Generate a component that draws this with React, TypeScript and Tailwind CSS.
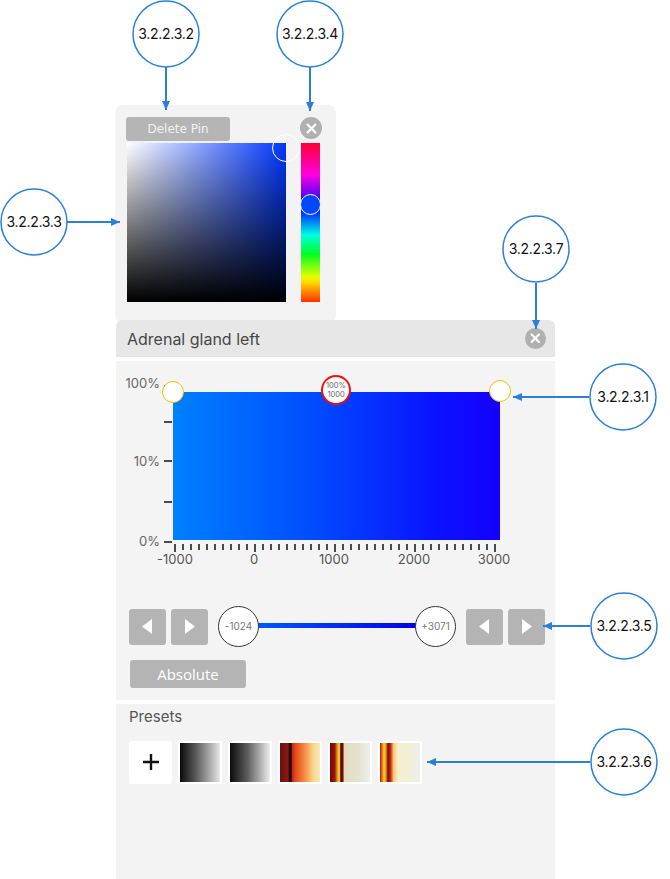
import React from 'react';

const BLUE = '#2b7fd6';

type Callout = { cx: number; cy: number; label: string; x1: number; y1: number; x2: number; y2: number };

const callouts: Callout[] = [
  { cx: 166, cy: 34, label: '3.2.2.3.2', x1: 166, y1: 67, x2: 166, y2: 110 },
  { cx: 310, cy: 34, label: '3.2.2.3.4', x1: 310, y1: 67, x2: 310, y2: 111 },
  { cx: 34, cy: 222, label: '3.2.2.3.3', x1: 67, y1: 222, x2: 120, y2: 222 },
  { cx: 536, cy: 249, label: '3.2.2.3.7', x1: 536, y1: 283, x2: 536, y2: 329 },
  { cx: 623, cy: 397, label: '3.2.2.3.1', x1: 589, y1: 397, x2: 513, y2: 397 },
  { cx: 624, cy: 626, label: '3.2.2.3.5', x1: 590, y1: 626, x2: 543, y2: 626 },
  { cx: 624, cy: 762, label: '3.2.2.3.6', x1: 590, y1: 762, x2: 427, y2: 762 },
];

// arrowhead polygon pointing from (x1,y1) toward (x2,y2)
function arrowHead(c: Callout) {
  const dx = c.x2 - c.x1;
  const dy = c.y2 - c.y1;
  const len = Math.hypot(dx, dy);
  const ux = dx / len;
  const uy = dy / len;
  const bx = c.x2 - ux * 9;
  const by = c.y2 - uy * 9;
  const px = -uy * 4;
  const py = ux * 4;
  return `${c.x2},${c.y2} ${bx + px},${by + py} ${bx - px},${by - py}`;
}

function CloseDot({ size = 20 }: { size?: number }) {
  return (
    <div className="rounded-full bg-[#b0b0b0] flex items-center justify-center" style={{ width: size, height: size }}>
      <svg width={size * 0.5} height={size * 0.5} viewBox="0 0 10 10">
        <path d="M1.5 1.5 L8.5 8.5 M8.5 1.5 L1.5 8.5" stroke="white" strokeWidth="2" strokeLinecap="round" />
      </svg>
    </div>
  );
}

function StepButton({ dir }: { dir: 'left' | 'right' }) {
  return (
    <button className="w-[37px] h-[36px] rounded-[3px] bg-[#b4b4b4] flex items-center justify-center">
      <svg width="11" height="15" viewBox="0 0 11 15">
        {dir === 'left' ? <polygon points="10,0 10,15 0,7.5" fill="white" /> : <polygon points="1,0 1,15 11,7.5" fill="white" />}
      </svg>
    </button>
  );
}

const presets = [
  'bg-[linear-gradient(to_right,#0a0a0a,#5a5a5a_40%,#e6e6e6)]',
  'bg-[linear-gradient(to_right,#0a0a0a,#606060_45%,#eeeeee)]',
  'bg-[linear-gradient(to_right,#6b0f0f_0%,#8a1a10_20%,#1a0505_24%,#1a0505_28%,#c81e10_30%,#e04a1a_38%,#f07030_52%,#f89a50_66%,#f8d890_84%,#f6eab8)]',
  'bg-[linear-gradient(to_right,#700808_0%,#a01010_12%,#e8c020_20%,#f0c030_24%,#500505_27%,#800a0a_32%,#e0dcc0_36%,#e4e2cc_70%,#efefef)]',
  'bg-[linear-gradient(to_right,#c01010_0%,#ffd020_10%,#f8a020_14%,#701010_20%,#c02010_26%,#f8c870_34%,#f6f0d0_45%,#f2efd8_75%,#eeeeee)]',
];

export default function App() {
  const ticks = Array.from({ length: 41 }, (_, i) => i);
  const xLabels = [
    { t: '-1000', x: 59 },
    { t: '0', x: 138 },
    { t: '1000', x: 218 },
    { t: '2000', x: 298 },
    { t: '3000', x: 378 },
  ];
  const yTicks = [24, 60, 99, 140, 180];

  return (
    <div className="relative w-[670px] h-[879px] bg-white overflow-hidden font-['Inter',sans-serif]">
      <div className="flex flex-col pl-[115px] pt-[105px]">
        {/* Colour picker */}
        <div className="w-[221px] h-[218px] bg-[#f3f3f3] rounded-[8px] pl-[11px] pr-[15px] pt-[12px]">
          <div className="flex items-center justify-between">
            <button className="w-[104px] h-[24px] rounded-[3px] bg-[#b5b5b5] text-[12px] text-[#f2f2f2] font-['DejaVu_Sans',sans-serif]">
              Delete Pin
            </button>
            <div className="mr-[-1px] mt-[-2px]">
              <CloseDot size={22} />
            </div>
          </div>
          <div className="flex mt-[2px] pl-[1px] gap-[15px]">
            <div className="relative w-[159px] h-[159px] bg-[linear-gradient(to_top,#000,rgba(0,0,0,0)),linear-gradient(to_right,#fff,#0036ff)]">
              <div className="absolute right-[-14px] top-[-9px] w-[28px] h-[28px] rounded-full border border-white" />
            </div>
            <div className="relative w-[19px] h-[159px] bg-[linear-gradient(to_bottom,#ff0033,#ff00e0_20%,#2000ff_38%,#0040ff_45%,#00ffe0_58%,#00ff20_70%,#e0ff00_84%,#ffe000_87%,#ff3000)]">
              <div className="absolute left-[-1px] top-[51px] w-[21px] h-[21px] rounded-full border-[1.5px] border-white bg-[#0048ff]" />
            </div>
          </div>
        </div>

        {/* Main panel */}
        <div className="w-[439px] h-[559px] ml-[1px] mt-[-3px] flex flex-col">
          <div className="h-[37px] shrink-0 bg-[#e7e7e7] rounded-t-[6px] flex items-center justify-between pl-[11px] pr-[9px]">
            <span className="text-[16px] text-[#474747]">Adrenal gland left</span>
            <CloseDot size={21} />
          </div>
          <div className="h-[4px] shrink-0 bg-white" />

          {/* Chart section */}
          <div className="relative h-[339px] shrink-0 bg-[#f4f4f4]">
            {/* y axis */}
            {yTicks.map((y) => (
              <div key={y} className="absolute left-[48px] w-[8px] h-[2px] bg-[#4a4a4a]" style={{ top: y }} />
            ))}
            <span className="absolute right-[395px] top-[13px] text-[13px] text-[#666]">100%</span>
            <span className="absolute right-[395px] top-[91px] text-[13px] text-[#666]">10%</span>
            <span className="absolute right-[395px] top-[171px] text-[13px] text-[#666]">0%</span>

            <div className="absolute left-[57px] top-[31px] w-[327px] h-[148px] bg-[linear-gradient(to_right,#0080ff,#0050ff_40%,#0a12ff_80%,#1400ff)]" />

            {/* x axis ticks */}
            {ticks.map((i) => (
              <div
                key={i}
                className={`absolute w-[2px] bg-[#4a4a4a] ${i % 10 === 0 ? 'h-[8px]' : 'h-[6px]'}`}
                style={{ left: 58 + i * 8, top: 183 }}
              />
            ))}
            {xLabels.map((l) => (
              <span key={l.t} className="absolute top-[189px] text-[13px] text-[#555] -translate-x-1/2" style={{ left: l.x }}>
                {l.t}
              </span>
            ))}

            {/* handles */}
            <div className="absolute left-[46px] top-[20px] w-[22px] h-[22px] rounded-full bg-white border-[1.5px] border-[#f2c200]" />
            <div className="absolute left-[373px] top-[19px] w-[22px] h-[22px] rounded-full bg-white border-[1.5px] border-[#f2c200]" />
            <div className="absolute left-[205px] top-[14px] w-[30px] h-[30px] rounded-full bg-white border-2 border-[#f01010] flex flex-col items-center justify-center leading-[9px] text-[7.5px] text-[#666]">
              <span>100%</span>
              <span>1000</span>
            </div>

            {/* window slider row */}
            <div className="absolute left-0 top-[245px] flex items-center pl-[13px]">
              <div className="flex gap-[5px]">
                <StepButton dir="left" />
                <StepButton dir="right" />
              </div>
              <div className="relative ml-[10px] w-[238px] h-[41px] flex items-center">
                <div className="absolute left-[38px] right-[38px] top-[17px] h-[5px] bg-[linear-gradient(to_right,#0058ff,#0000f0)]" />
                <div className="relative w-[41px] h-[41px] rounded-full bg-white border border-[#333] flex items-center justify-center text-[10px] text-[#777]">
                  -1024
                </div>
                <div className="relative ml-auto w-[41px] h-[41px] rounded-full bg-white border border-[#333] flex items-center justify-center text-[10px] text-[#777]">
                  +3071
                </div>
              </div>
              <div className="flex gap-[5px] ml-[10px]">
                <StepButton dir="left" />
                <StepButton dir="right" />
              </div>
            </div>

            <button className="absolute left-[14px] top-[299px] w-[116px] h-[28px] rounded-[3px] bg-[#b4b4b4] text-[15px] text-white font-['Open_Sans',sans-serif]">
              Absolute
            </button>
          </div>
          <div className="h-[4px] shrink-0 bg-white" />

          {/* Presets */}
          <div className="flex-1 bg-[#f3f3f3] pl-[13px] pt-[2px]">
            <div className="text-[15px] text-[#555]">Presets</div>
            <div className="flex gap-[6px] mt-[12px]">
              <div className="w-[43px] h-[43px] rounded-[3px] bg-white flex items-center justify-center">
                <svg width="18" height="18" viewBox="0 0 18 18">
                  <path d="M9 1 V17 M1 9 H17" stroke="#111" strokeWidth="2.4" />
                </svg>
              </div>
              {presets.map((p, i) => (
                <div key={i} className="w-[44px] h-[43px] bg-white p-[2px]">
                  <div className={`w-full h-full ${p}`} />
                </div>
              ))}
            </div>
          </div>
        </div>
      </div>

      {/* annotation callouts */}
      <svg className="absolute inset-0 pointer-events-none" width="670" height="879">
        {callouts.map((c) => (
          <g key={c.label}>
            <line x1={c.x1} y1={c.y1} x2={c.x2} y2={c.y2} stroke={BLUE} strokeWidth="2" />
            <polygon points={arrowHead(c)} fill={BLUE} />
            <circle cx={c.cx} cy={c.cy} r="33" fill="white" stroke={BLUE} strokeWidth="1.5" />
            <text
              x={c.cx}
              y={c.cy + 5}
              textAnchor="middle"
              fontFamily="Inter, sans-serif"
              fontSize="14"
              letterSpacing="-0.3"
              fill="#111"
            >
              {c.label}
            </text>
          </g>
        ))}
      </svg>
    </div>
  );
}
